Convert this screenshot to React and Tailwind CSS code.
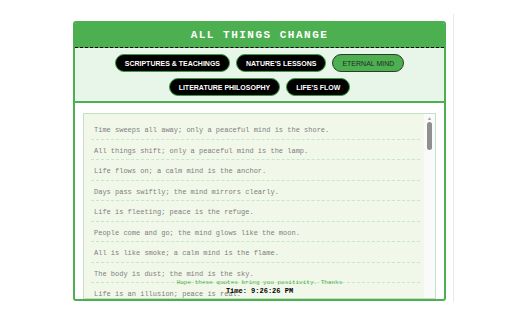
const categories = [
  ["Scriptures & Teachings", "Nature's Lessons", "Eternal Mind"],
  ["Literature Philosophy", "Life's Flow"],
];

const quotes = [
  "Time sweeps all away; only a peaceful mind is the shore.",
  "All things shift; only a peaceful mind is the lamp.",
  "Life flows on; a calm mind is the anchor.",
  "Days pass swiftly; the mind mirrors clearly.",
  "Life is fleeting; peace is the refuge.",
  "People come and go; the mind glows like the moon.",
  "All is like smoke; a calm mind is the flame.",
  "The body is dust; the mind is the sky.",
  "Life is an illusion; peace is real.",
];

const mono = { fontFamily: '"Liberation Mono", "Courier New", monospace' };
const sans = { fontFamily: '"Liberation Sans", Arial, sans-serif' };

export default function App() {
  const active = "Eternal Mind";

  return (
    <div className="relative w-[512px] h-[320px] bg-white overflow-hidden">
      {/* page edge line */}
      <div className="absolute left-[453px] top-[14px] h-[288px] w-px bg-[#e8e8e8]" />

      <div className="relative mt-[21px] ml-[73px] w-[373px] h-[280px] overflow-hidden border-2 border-[#4caf50] rounded-[3px] bg-white flex flex-col">
        {/* Header */}
        <div className="h-[25px] shrink-0 bg-[#4caf50] border-b border-dashed border-black flex items-center justify-center">
          <h1 className="text-[11px] font-bold tracking-[1.5px] text-white uppercase leading-none" style={mono}>
            All Things Change
          </h1>
        </div>

        {/* Category tabs */}
        <div className="shrink-0 bg-[#e8f5e9] pt-[6px] pb-[5px] border-b-2 border-[#4caf50] flex flex-col items-center gap-[6px]">
          {categories.map((row, i) => (
            <div key={i} className="flex gap-[6px]">
              {row.map((c) => (
                <button
                  key={c}
                  className={
                    c === active
                      ? "h-[18px] px-[9px] rounded-full border-[1.5px] border-[#2f3a2f] bg-[#4caf50] text-[#2a2a2a] text-[7px] uppercase leading-none"
                      : "h-[18px] px-[9px] rounded-full border-[1.5px] border-[#3c9a40] bg-black text-white text-[7px] font-bold uppercase leading-none"
                  }
                  style={sans}
                >
                  {c}
                </button>
              ))}
            </div>
          ))}
        </div>

        {/* Quotes */}
        <div className="flex-1 min-h-0 pt-[10px] px-[8px]">
          <div className="h-full flex border border-[#c5e1c5] bg-[#f1f8e9]">
            <div className="flex-1 min-w-0 pt-[5px] pl-[7px] pr-[4px]">
              {quotes.map((q) => (
                <div
                  key={q}
                  className="pt-[6px] pb-[3.5px] px-[3px] border-b border-dashed border-[#c8e6c9] text-[7px] leading-[10px] text-[#808080] whitespace-nowrap"
                  style={mono}
                >
                  {q}
                </div>
              ))}
            </div>
            <div className="w-[11px] shrink-0 bg-[#fafafa] flex flex-col items-center pt-[1px]">
              <span className="text-[5px] leading-[6px] text-[#a0a0a0]">▲</span>
              <div className="mt-[1px] w-[5px] h-[28px] rounded-full bg-[#8f8f8f]" />
            </div>
          </div>
        </div>

        {/* Footer overlay */}
        <div className="absolute left-0 right-0 bottom-[3px] flex flex-col items-center">
          <p className="text-[6px] leading-[8px] text-[#4caf50]" style={mono}>
            Hope these quotes bring you positivity. Thanks
          </p>
          <p className="text-[7px] leading-[9px] font-bold text-black" style={mono}>
            Time: 9:26:26 PM
          </p>
        </div>
      </div>
    </div>
  );
}
